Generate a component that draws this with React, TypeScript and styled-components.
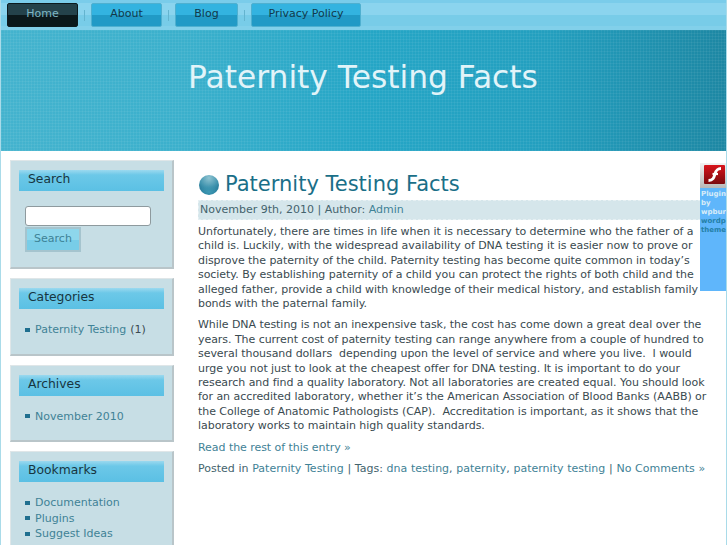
import React from "react";
import styled, { createGlobalStyle } from "styled-components";

const Global = createGlobalStyle`
  html, body { margin: 0; padding: 0; height: 545px; overflow: hidden; background: #fff; }
  body { font-family: "DejaVu Sans", sans-serif; font-size: 11px; line-height: 14.4px; color: #3a4a50; }
  * { box-sizing: border-box; }
`;

const Page = styled.div`
  position: relative;
  width: 727px;
  height: 545px;
  overflow: hidden;
  border-left: 1px solid #a9dbe9;
  border-right: 1px solid #a9dbe9;
`;
const Nav = styled.nav`
  height: 30px;
  margin: 0 -1px;
  padding: 3px 0 0 7px;
  display: flex;
  align-items: flex-start;
  background: linear-gradient(#7accea 0, #7accea 3px, #8bd4ee 3px, #8bd4ee 15px, #78cce8 15px, #78cce8 26px, #82d0ea 26px);
`;
const NavItem = styled.a<{ $w: number; $active?: boolean }>`
  width: ${(p) => p.$w}px;
  height: 24px;
  padding-bottom: 2px;
  border-radius: 2px;
  display: flex;
  align-items: center;
  justify-content: center;
  color: ${(p) => (p.$active ? "#7fb6c3" : "#12394a")};
  border: 1px solid ${(p) => (p.$active ? "#0c1a1e" : "#4fb0d0")};
  background: ${(p) =>
    p.$active
      ? "linear-gradient(#24424b 0, #24424b 50%, #0b181b 50%, #0b181b 100%)"
      : "linear-gradient(#33b3e0 0, #33b3e0 48%, #219ac6 52%, #219ac6 100%)"};
`;
const NavSep = styled.span`
  width: 1px;
  height: 11px;
  margin: 7px 6px 0;
  background: #64b4cf;
`;
const Masthead = styled.header`
  height: 121px;
  display: flex;
  justify-content: center;
  padding-top: 26px;
  padding-right: 1px;
  font-size: 31.3px;
  line-height: 42px;
  color: #e2f4f9;
  background:
    repeating-linear-gradient(90deg, rgba(255,255,255,.05) 0 1px, transparent 1px 3px),
    repeating-linear-gradient(0deg, rgba(255,255,255,.05) 0 1px, transparent 1px 3px),
    linear-gradient(90deg, #44b3ce 0, #3bb0cc 25%, #25a6c6 50%, #239fbf 75%, #1d87a3 100%);
`;
const Body = styled.div`
  display: flex;
  align-items: flex-start;
  padding: 9px 0 0 9px;
`;
const Sidebar = styled.aside`
  flex: 0 0 164px;
  display: flex;
  flex-direction: column;
  gap: 9px;
`;
const Panel = styled.section`
  background: #c7dee5;
  border: 1px solid #dfe6e8;
  border-right: 2px solid #b9c5c9;
  border-bottom: 2px solid #b9c5c9;
  padding: 9px 8px 15px;
`;
const PanelTitle = styled.h3`
  margin: 0;
  height: 21px;
  padding-left: 9px;
  font-weight: 400;
  font-size: 12.35px;
  line-height: 19px;
  color: #173540;
  background: linear-gradient(#9bd9ef 0, #6cc8e8 5px, #5bc0e4 100%);
`;
const SearchBox = styled.div`
  padding: 15px 0 0 6px;
  display: flex;
  flex-direction: column;
  align-items: flex-start;
`;
const SearchInput = styled.input`
  width: 126px;
  height: 20px;
  padding: 0;
  background: #fff;
  border: 1px solid #8e9a9e;
  border-radius: 3px;
`;
const SearchButton = styled.button`
  width: 56px;
  height: 25px;
  margin-top: 1px;
  padding: 0 0 2px;
  font-family: inherit;
  font-size: 11px;
  color: #3d8296;
  border: 2px solid #a5c4ce;
  background: linear-gradient(#8ed7ec 0, #8ed7ec 50%, #78cde8 50%, #78cde8 100%);
`;
const List = styled.ul`
  list-style: none;
  margin: 0;
  padding: 13px 0 1px 6px;
  line-height: 15.5px;
`;
const ListItem = styled.li`
  display: flex;
  align-items: center;
  color: #3a4a50;
  &::before {
    content: "";
    width: 5px;
    height: 4px;
    margin-right: 5px;
    background: #1f6f8f;
  }
`;
const Link = styled.a`
  color: #3f8296;
`;
const Count = styled.span`
  margin-left: 4px;
`;
const Main = styled.main`
  flex: 1;
  min-width: 0;
  padding: 12px 0 0 24px;
`;
const PostHead = styled.div`
  display: flex;
  align-items: flex-start;
  gap: 6px;
  height: 27px;
`;
const Ball = styled.span`
  width: 20px;
  height: 20px;
  border-radius: 50%;
  margin: 3px 0 0 1px;
  background:
    radial-gradient(ellipse 70% 35% at 50% 85%, #3f9ab5 0, rgba(63,154,181,0) 100%),
    radial-gradient(circle at 50% 15%, #8fc4d2 0, #3e92ad 50%, #1c6f8f 78%, #257f9c 100%);
`;
const PostTitle = styled.h1`
  margin: 0;
  font-weight: 400;
  font-size: 21px;
  line-height: 24px;
  color: #1a6f88;
`;
const Meta = styled.div`
  height: 20px;
  margin-top: 1px;
  padding-left: 1px;
  line-height: 18px;
  background: #d5e6eb;
  border: 1px dashed #e6f0f3;
  color: #44636d;
`;
const Para = styled.p`
  margin: 5px 0 7px;
  width: 512px;
  letter-spacing: -0.05px;
  color: #3a4a50;
`;
const Footer = styled.p`
  margin: 7px 0 0;
  white-space: nowrap;
  word-spacing: 0.2px;
  color: #44636d;
`;
const FlashAd = styled.div`
  position: absolute;
  top: 163px;
  right: 0;
  width: 26px;
  height: 128px;
  background: #5fb6fb;
  overflow: hidden;
  font-size: 7px;
  font-weight: 700;
  line-height: 9px;
  color: #d8ecf8;
`;
const FlashIconWrap = styled.div`
  height: 25px;
  padding: 2px 0 0 4px;
  margin-bottom: 2px;
  background: linear-gradient(#f2f2f2, #b8b8b8);
`;
const DarkLink = styled.span`
  color: #2480a8;
  display: block;
`;
const AdText = styled.div`
  white-space: nowrap;
  padding-left: 1px;
`;

export default function App() {
  return (
    <>
      <Global />
      <Page>
        <Nav>
          <NavItem $w={71} $active>Home</NavItem>
          <NavSep />
          <NavItem $w={71}>About</NavItem>
          <NavSep />
          <NavItem $w={63}>Blog</NavItem>
          <NavSep />
          <NavItem $w={110}>Privacy Policy</NavItem>
        </Nav>
        <Masthead>Paternity Testing Facts</Masthead>
        <Body>
          <Sidebar>
            <Panel>
              <PanelTitle>Search</PanelTitle>
              <SearchBox>
                <SearchInput />
                <SearchButton>Search</SearchButton>
              </SearchBox>
            </Panel>
            <Panel>
              <PanelTitle>Categories</PanelTitle>
              <List>
                <ListItem><Link>Paternity Testing</Link><Count>(1)</Count></ListItem>
              </List>
            </Panel>
            <Panel>
              <PanelTitle>Archives</PanelTitle>
              <List>
                <ListItem><Link>November 2010</Link></ListItem>
              </List>
            </Panel>
            <Panel>
              <PanelTitle>Bookmarks</PanelTitle>
              <List>
                <ListItem><Link>Documentation</Link></ListItem>
                <ListItem><Link>Plugins</Link></ListItem>
                <ListItem><Link>Suggest Ideas</Link></ListItem>
                <ListItem><Link>Support Forum</Link></ListItem>
              </List>
            </Panel>
          </Sidebar>
          <Main>
            <PostHead>
              <Ball />
              <PostTitle>Paternity Testing Facts</PostTitle>
            </PostHead>
            <Meta>November 9th, 2010 | Author: <Link>Admin</Link></Meta>
            <Para>Unfortunately, there are times in life when it is necessary to determine who the father of a child is. Luckily, with the widespread availability of DNA testing it is easier now to prove or disprove the paternity of the child. Paternity testing has become quite common in today’s society. By establishing paternity of a child you can protect the rights of both child and the alleged father, provide a child with knowledge of their medical history, and establish family bonds with the paternal family.</Para>
            <Para>While DNA testing is not an inexpensive task, the cost has come down a great deal over the years. The current cost of paternity testing can range anywhere from a couple of hundred to several thousand dollars&nbsp; depending upon the level of service and where you live.&nbsp; I would urge you not just to look at the cheapest offer for DNA testing. It is important to do your research and find a quality laboratory. Not all laboratories are created equal. You should look for an accredited laboratory, whether it’s the American Association of Blood Banks (AABB) or the College of Anatomic Pathologists (CAP).&nbsp; Accreditation is important, as it shows that the laboratory works to maintain high quality standards.</Para>
            <Para><Link>Read the rest of this entry »</Link></Para>
            <Footer>Posted in <Link>Paternity Testing</Link> | Tags: <Link>dna testing</Link>, <Link>paternity</Link>, <Link>paternity testing</Link> | <Link>No Comments »</Link></Footer>
          </Main>
        </Body>
        <FlashAd>
          <FlashIconWrap>
            <svg width="21" height="19" viewBox="0 0 21 19">
              <defs>
                <linearGradient id="fl" x1="0" y1="0" x2="0" y2="1">
                  <stop offset="0" stopColor="#d8141c" />
                  <stop offset="1" stopColor="#7a0a0e" />
                </linearGradient>
              </defs>
              <rect width="21" height="19" rx="1" fill="url(#fl)" />
              <path d="M4.500 15.500c4.500 0 5.500-3 6.500-6.500s2-5.500 6-5.500" fill="none" stroke="#fff" strokeWidth="2.800" />
              <path d="M8.500 9h5.500" stroke="#fff" strokeWidth="2.200" />
            </svg>
          </FlashIconWrap>
          <AdText>
            Plugin<br />by<br />wpburn.com
            <DarkLink>wordpress<br />themes</DarkLink>
          </AdText>
        </FlashAd>
      </Page>
    </>
  );
}
